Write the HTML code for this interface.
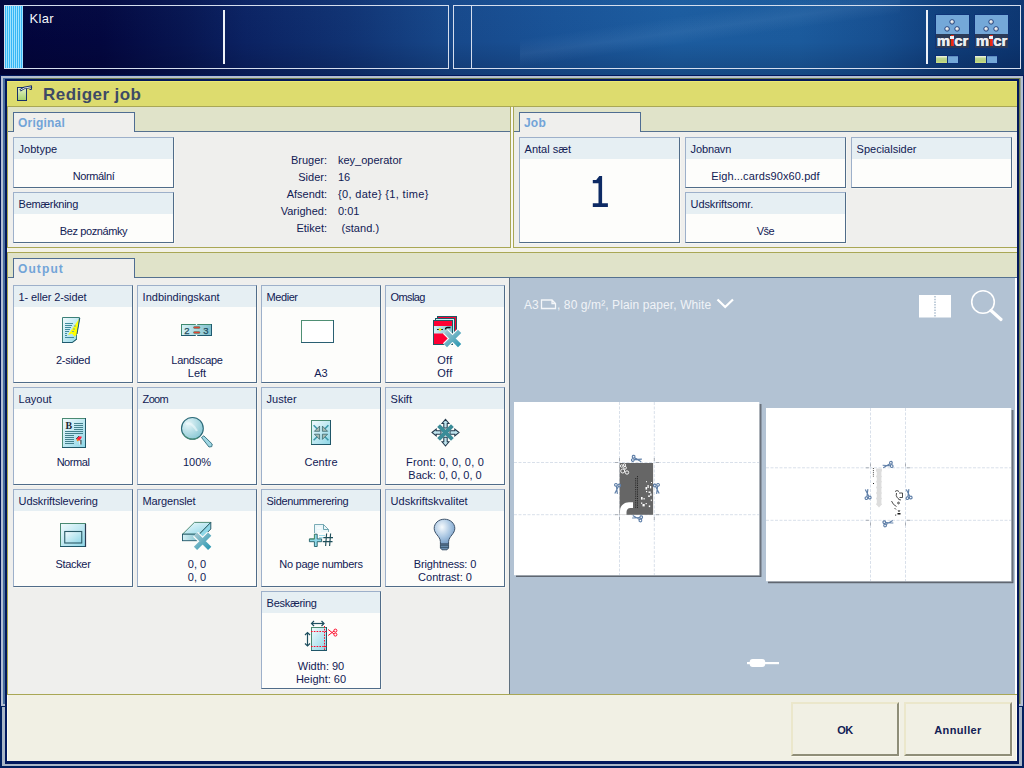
<!DOCTYPE html>
<html>
<head>
<meta charset="utf-8">
<title>Rediger job</title>
<style>
*{box-sizing:border-box;margin:0;padding:0}
html,body{width:1024px;height:768px;overflow:hidden}
body{position:relative;font-family:"Liberation Sans",sans-serif;font-size:11px;color:#112054;
 background:#03073c;}
.abs{position:absolute}
/* top status area */
#top{left:0;top:0;width:1024px;height:76px;
 background:
 linear-gradient(172deg,rgba(255,255,255,0) 30%,rgba(200,225,255,0.07) 42%,rgba(255,255,255,0) 52%) 520px 0/380px 76px no-repeat,
 linear-gradient(180deg,rgba(70,140,210,0.03) 0%,rgba(0,0,20,0.0) 55%,rgba(0,0,25,0.20) 100%),
 linear-gradient(90deg,#02043a 0%,#03073f 10%,#071550 18%,#0b2262 24%,#103272 34%,#17488a 44%,#195296 54%,#1c5c9f 66%,#1b5a9c 78%,#174f90 86%,#103f7c 92%,#0c3570 100%);}
.sbox{border:1px solid #d5deee;}
.vline{background:#eef2f8}
/* dialog */
#dlg{left:0;top:75px;width:1024px;height:693px;background:#02185c}
.tabl{font-weight:bold;font-size:12px;color:#72a4d8;letter-spacing:0.2px;line-height:14px;display:block}
.tile{position:absolute;background:#fdfdfb;border:1px solid #9db0ca;border-right-color:#506c89;border-bottom-color:#506c89;box-shadow:1px 1px 0 #f6f6f2}
.tile .h{position:absolute;left:0;top:0;right:0;height:21px;background:#e6eff3;padding:5px 0 0 4.6px;white-space:nowrap;line-height:13px}
.tile .v{position:absolute;left:0;right:0;text-align:center;white-space:nowrap;line-height:13px}
.btn{position:absolute;box-shadow:1px 1px 0 #faf8ec;background:#f1f0e4;border:2px solid #ebe7cb;border-right-color:#8f8e78;border-bottom-color:#8f8e78;font-weight:bold;font-size:11px;text-align:center}

.pnl{background:#e0e3c9;border:1px solid #a9a755}
.pnl .pc{position:absolute;left:0;right:0;top:24px;bottom:0;background:#efefed;border-top:1px solid #55718f}
.tab{background:#efefed;border:1px solid #4f6d92;border-bottom:none;padding:3px 0 0 4px}

.ml{text-align:right;white-space:nowrap;line-height:13px}
.mv{white-space:nowrap;line-height:13px}
.big{position:absolute;left:0;right:0;top:30px;text-align:center;font-size:43px;line-height:50px;color:#16265a}
.ic{position:absolute;left:0;top:0}
.btn span{position:absolute;left:0;right:0;top:20px;line-height:13px}
.micr{width:33px;height:33px;background:linear-gradient(180deg,#74a8d8 0,#74a8d8 19px,#2c3b58 19px,#2c3b58 33px);outline:1px solid #0e3478}
.mt{position:absolute;left:0.5px;top:17px;font-weight:bold;font-size:15px;line-height:17px;white-space:nowrap;color:#eceef1;text-shadow:0.4px 0 0 #eceef1}
.mi{color:#f02a10;text-shadow:0.4px 0 0 #f02a10}
.md{position:absolute;left:14px;top:21px;width:4px;height:3px;background:#eef2f8}
</style>
</head>
<body>
<svg width="0" height="0" style="position:absolute"><defs>
<linearGradient id="cy" x1="0" y1="0" x2="1" y2="1"><stop offset="0" stop-color="#f2fbfd"/><stop offset="1" stop-color="#8dd6e6"/></linearGradient>
<linearGradient id="cyh" x1="0" y1="0" x2="1" y2="0"><stop offset="0" stop-color="#d6f2f6"/><stop offset="1" stop-color="#7fbfcc"/></linearGradient>
<linearGradient id="xg" x1="0" y1="0" x2="1" y2="1"><stop offset="0" stop-color="#9fc6d0"/><stop offset="1" stop-color="#2f9ab4"/></linearGradient>
<radialGradient id="mg" cx="0.3" cy="0.3" r="0.8"><stop offset="0" stop-color="#e6f6f9"/><stop offset="1" stop-color="#86c6d3"/></radialGradient>
<radialGradient id="bg" cx="0.38" cy="0.32" r="0.75"><stop offset="0" stop-color="#f6fafd"/><stop offset="0.55" stop-color="#a9c6e2"/><stop offset="1" stop-color="#6f97c2"/></radialGradient>
</defs></svg>
<div id="top" class="abs"></div>
<div class="abs sbox" style="left:4px;top:5px;width:445px;height:64px"></div>
<div class="abs" id="stripes" style="left:5px;top:6px;width:18px;height:62px;background:repeating-linear-gradient(90deg,#36b6f5 0,#36b6f5 1px,#9fe2ff 1px,#9fe2ff 2px)"></div>
<div class="abs" style="left:29.5px;top:11px;font-size:13px;line-height:15px;color:#f4f6fa;letter-spacing:0.3px">Klar</div>
<div class="abs vline" style="left:223px;top:10px;width:2px;height:54px"></div>
<div class="abs sbox" style="left:453px;top:5px;width:568px;height:64px"></div>
<div class="abs" style="left:471px;top:6px;width:1px;height:62px;background:#d5deee"></div>
<div class="abs vline" style="left:926px;top:10px;width:2px;height:54px"></div>

<div class="abs micr" style="left:936px;top:15px"><svg width="33" height="19" style="position:absolute;left:0;top:0"><defs><radialGradient id="sp936" cx="0.4" cy="0.35" r="0.7"><stop offset="0" stop-color="#ffffff"/><stop offset="1" stop-color="#a8b0b8"/></radialGradient></defs><g fill="url(#sp936)" stroke="#0c2c70" stroke-width="0.8"><circle cx="16.1" cy="6.9" r="2.3"/><circle cx="11.1" cy="13.9" r="2.3"/><circle cx="21.1" cy="13.9" r="2.3"/></g></svg><div class="mt">m<span class="mi">i</span>cr</div><div class="md"></div></div>
<div class="abs" style="left:936px;top:56px;width:11px;height:7px;background:linear-gradient(180deg,#f4f7e6 0,#bcd692 35%,#b4d080 70%,#cfe084 100%);outline:1px solid #0c2f74"></div>
<div class="abs" style="left:948px;top:56px;width:10px;height:7px;background:#74a8d8;border-top:1px solid #5f8fc0;outline:1px solid #0c2f74"></div>
<div class="abs micr" style="left:975px;top:15px"><svg width="33" height="19" style="position:absolute;left:0;top:0"><defs><radialGradient id="sp975" cx="0.4" cy="0.35" r="0.7"><stop offset="0" stop-color="#ffffff"/><stop offset="1" stop-color="#a8b0b8"/></radialGradient></defs><g fill="url(#sp975)" stroke="#0c2c70" stroke-width="0.8"><circle cx="16.1" cy="6.9" r="2.3"/><circle cx="11.1" cy="13.9" r="2.3"/><circle cx="21.1" cy="13.9" r="2.3"/></g></svg><div class="mt">m<span class="mi">i</span>cr</div><div class="md"></div></div>
<div class="abs" style="left:975px;top:56px;width:11px;height:7px;background:linear-gradient(180deg,#f4f7e6 0,#bcd692 35%,#b4d080 70%,#cfe084 100%);outline:1px solid #0c2f74"></div>
<div class="abs" style="left:987px;top:56px;width:10px;height:7px;background:#74a8d8;border-top:1px solid #5f8fc0;outline:1px solid #0c2f74"></div>
<!-- dialog frame -->
<div id="dlg" class="abs"></div>
<div class="abs" style="left:1px;top:76px;width:1022px;height:630px;background:#b4bfd2"></div>
<div class="abs" style="left:3px;top:78px;width:1018px;height:626px;background:#4a6f9e"></div>
<div class="abs" style="left:6px;top:78px;width:1015px;height:1px;background:linear-gradient(90deg,#4a6f9e 0,#6f7d50 40px,#6f7d50 100%)"></div>
<div class="abs" style="left:1019px;top:78px;width:2px;height:626px;background:linear-gradient(90deg,#6f7d50 0,#6f7d50 1px,#98a490 1px,#98a490 2px)"></div>
<div class="abs" style="left:5px;top:79px;width:1014px;height:682px;background:#02185c"></div>
<div class="abs" style="left:0;top:706px;width:1024px;height:62px;background:#02205e"></div>
<div class="abs" style="left:2px;top:707px;width:1020px;height:59px;background:#a9b6c6"></div>
<div class="abs" style="left:5px;top:707px;width:1014px;height:57px;background:#02185c"></div>
<!-- title bar -->
<div class="abs" style="left:7px;top:81px;width:1010px;height:26px;background:#dddc6e;border-top:1px solid #ebe872;border-bottom:1px solid #b6b457"></div>
<div class="abs" style="left:43px;top:85px;font-size:17px;line-height:19px;letter-spacing:0.45px;font-weight:bold;color:#3d4a66;white-space:nowrap">Rediger job</div>
<svg class="abs" style="left:14px;top:84px" width="22" height="19" viewBox="14 84 22 19"><defs><linearGradient id="gp" x1="0" y1="0" x2="0" y2="1"><stop offset="0" stop-color="#e6f2c8"/><stop offset="1" stop-color="#a6d26a"/></linearGradient></defs>
<rect x="17.5" y="87.5" width="9" height="13" fill="url(#gp)" stroke="#16306a"/>
<path d="M20 90.5L24 88L32 86.5" stroke="#16306a" stroke-width="2.4" fill="none"/><path d="M20.5 90L24.5 88L31.5 86.8" stroke="#eef2f6" stroke-width="0.9" fill="none"/>
<path d="M31.5 86V89.5H29.5" stroke="#16306a" stroke-width="1" fill="none"/></svg>
<!-- body -->
<div class="abs" id="bodybg" style="left:7px;top:107px;width:1010px;height:588px;background:#e0e3c9"></div>
<div class="abs" id="botbar" style="left:7px;top:694px;width:1010px;height:67px;background:#f1f0e4;border-top:1px solid #a9a755;border-left:1px solid #fffdf0;border-right:1px solid #fffdf0"></div>

<!-- Original panel -->
<div class="abs pnl" style="left:7px;top:106px;width:504px;height:142px"><div class="pc"></div></div>
<div class="abs tab" style="left:13px;top:112px;width:122px;height:20px"><span class="tabl">Original</span></div>
<!-- Job panel -->
<div class="abs pnl" style="left:513px;top:106px;width:504px;height:142px;border-right:none"><div class="pc"></div></div>
<div class="abs tab" style="left:519px;top:112px;width:122px;height:20px"><span class="tabl">Job</span></div>
<!-- white divider -->
<div class="abs" style="left:511px;top:107px;width:2px;height:141px;background:#f8f8f2"></div>
<!-- gap -->
<div class="abs" style="left:7px;top:248px;width:1010px;height:4px;background:#f3f2e6"></div>
<!-- Output panel -->
<div class="abs pnl" style="left:7px;top:252px;width:1010px;height:443px;border-right:none"><div class="pc"></div></div>
<div class="abs tab" style="left:13px;top:258px;width:122px;height:20px"><span class="tabl" style="letter-spacing:1.1px">Output</span></div>
<!-- preview -->
<div class="abs" id="pv" style="left:509px;top:278px;width:506px;height:416px;background:#b2c2d3;border-left:1px solid #5f7080"></div>
<div class="abs" style="left:1015px;top:278px;width:2px;height:416px;background:#ffffff"></div>


<!-- preview content -->
<div class="abs" style="left:524px;top:298px;font-size:12px;line-height:14px;color:#f0f3f7;white-space:nowrap">A3</div>
<div class="abs" style="left:557px;top:298px;font-size:12px;line-height:14px;color:#f0f3f7;white-space:nowrap;letter-spacing:0.1px">, 80 g/m², Plain paper, White</div>
<svg class="abs" style="left:510px;top:278px" width="505" height="416" viewBox="510 278 505 416">
<defs><g id="sc" fill="none" stroke="#5f7fa8" stroke-width="1.15"><circle cx="-3.4" cy="-1.7" r="1.35"/><circle cx="-3.4" cy="1.7" r="1.35"/><path d="M-2.3 -1L5.2 1.3M-2.3 1L5.2 -1.3"/></g></defs>
<!-- header icons -->
<path d="M541.5 300V308.5H555.5V303.5L552 300Z M552 300V303.5H555.5" fill="none" stroke="#f4f6f9" stroke-width="1.3"/>
<path d="M717.5 299.5L725.2 307L733 299.5" fill="none" stroke="#ffffff" stroke-width="2.2"/>
<rect x="919" y="295" width="32" height="22.5" fill="#ffffff"/>
<path d="M935 296V317" stroke="#b2c2d3" stroke-width="1.6" stroke-dasharray="1.5 1.2"/>
<circle cx="983" cy="302" r="11.3" fill="none" stroke="#ffffff" stroke-width="1.6"/>
<path d="M991 310.5L1001 319.5" stroke="#ffffff" stroke-width="3.2" stroke-linecap="round"/>
<!-- left page -->
<rect x="516" y="404" width="245.4" height="172.9" fill="#555c66"/>
<rect x="516" y="404" width="244.4" height="171.9" fill="#8a929c"/>
<rect x="514" y="402" width="245.3" height="173.2" fill="#ffffff"/>
<g stroke="#d9e0ea" stroke-width="1" stroke-dasharray="3 1.5" fill="none">
<path d="M619.5 402V575M654.3 402V575M514 462.5H759M514 514.7H759"/></g>
<g stroke="#a9aeb6" stroke-width="1"><path d="M615 462.5h3M656 462.5h3M615 514.7h3M656 514.7h3M619.5 458v3M654.3 458v3M619.5 517v3M654.3 517v3"/></g>
<rect x="619.6" y="463" width="33.5" height="51.8" fill="#666666"/>
<g fill="none" stroke="#ffffff" stroke-width="0.9"><circle cx="621.7" cy="466" r="1.3"/><circle cx="624.5" cy="465" r="1.2"/><circle cx="625" cy="467.8" r="1.4"/><circle cx="622.7" cy="471" r="2"/><circle cx="627" cy="472.5" r="1.7"/></g>
<path d="M620 514.8V511C620 506 624 502.3 629 502.3H633V508H630C628 508 626.5 510 626.5 512V514.8Z" fill="#ffffff"/>
<path d="M635.7 478V508M637.5 476V508" stroke="#222" stroke-width="0.9" stroke-dasharray="1.2 1"/>
<g fill="#ffffff"><rect x="645.5" y="487" width="1.6" height="2.6"/><rect x="647.5" y="485" width="1.2" height="3"/><rect x="650" y="486" width="1.2" height="2.4"/><rect x="646" y="491" width="1.2" height="1.2"/><rect x="648.5" y="491.5" width="2.2" height="1.4"/><rect x="650.2" y="493.5" width="1.4" height="2.2"/><rect x="648" y="495.5" width="2" height="1.3"/><rect x="641" y="497" width="1.6" height="2.6"/><rect x="643.5" y="498" width="1.2" height="1.5"/><rect x="641" y="502.5" width="1.3" height="1.3"/><rect x="642.5" y="504" width="2.2" height="2.4"/><rect x="645.6" y="503" width="1.2" height="1.2"/><rect x="648.8" y="505.5" width="1.4" height="1.6"/><rect x="650.8" y="499.5" width="1" height="1.6"/><rect x="646" y="481.2" width="1" height="1"/><rect x="651" y="482" width="1" height="1"/></g>
<use href="#sc" transform="translate(636.5,459.2) rotate(14)"/>
<use href="#sc" transform="translate(617,488.5) rotate(100)"/>
<use href="#sc" transform="translate(657,488.5) rotate(80)"/>
<use href="#sc" transform="translate(637.5,518) rotate(194)"/>
<!-- right page -->
<rect x="768" y="410" width="245.4" height="173.2" fill="#555c66"/>
<rect x="768" y="410" width="244.4" height="172.2" fill="#8a929c"/>
<rect x="766" y="408" width="245.2" height="173.2" fill="#ffffff"/>
<g stroke="#d9e0ea" stroke-width="1" stroke-dasharray="3 1.5" fill="none">
<path d="M870.5 408V581M905.5 408V581M766 467.8H1011M766 520.3H1011"/></g>
<g stroke="#a9aeb6" stroke-width="1"><path d="M866 467.8h3M907 467.8h3M866 520.3h3M907 520.3h3M870.5 463.5v3M905.5 463.5v3M870.5 522.5v3M905.5 522.5v3"/></g>
<path d="M876.3 468.4H881.7L882 471L879 473.6L882 476.4L879.2 479L882 481.8L879.2 484.6L882 487.4L879.2 490.2L882 493L879.2 495.8L882 498.6L879.2 501.4L882 504.2L879 507.4L876 504.2L878 501.4L876 498.6L878 495.8L876 493L878 490.2L876 487.4L878 484.6L876 481.8L878 479L876 476.4L878 473.6L876 471Z" fill="#dddddd"/>
<rect x="876.8" y="469" width="4.6" height="36" fill="#dddddd"/>
<path d="M873.4 468v9" stroke="#333" stroke-width="0.9" stroke-dasharray="1 1.1"/><rect x="873" y="483" width="1" height="1" fill="#222"/>
<g fill="none" stroke="#222" stroke-width="0.8"><path d="M895 491.5q2-2 4 0M896.5 493q-1 3 1 5M899 493h3.5v4.5H899.5M898 498q0 2 3 2"/><circle cx="898.5" cy="503" r="0.9"/><path d="M891.5 501q1.5 4 5 5.5M894.5 508l1.5 1.5"/></g>
<path d="M897.5 510.5h3l-1.5 1.5zM897.5 513h3v1.6h-3z" fill="#111"/><rect x="895.2" y="514.6" width="1" height="1" fill="#111"/>
<use href="#sc" transform="translate(888,465.3) rotate(166)"/>
<use href="#sc" transform="translate(867.5,494.5) rotate(260)"/>
<use href="#sc" transform="translate(908.5,494.5) rotate(-100)"/>
<use href="#sc" transform="translate(888,523) rotate(-14)"/>
<!-- slider -->
<rect x="747" y="662" width="32" height="2.2" fill="#ffffff"/>
<rect x="749.7" y="659" width="15.5" height="8" rx="3" fill="#ffffff"/>
</svg>

<!-- boxes -->
<div class="tile" style="left:13px;top:137px;width:161px;height:51px"><div class="h">Jobtype</div><div class="v" style="top:32px;letter-spacing:-0.37px">Normální</div></div>
<div class="tile" style="left:13px;top:192px;width:161px;height:51px"><div class="h" style="letter-spacing:-0.3px">Bemærkning</div><div class="v" style="top:32px;letter-spacing:-0.39px">Bez poznámky</div></div>
<div class="tile" style="left:519px;top:137px;width:161px;height:106px"><div class="h">Antal sæt</div><svg style="position:absolute;left:0;top:0" width="159" height="104" viewBox="520 138 159 104"><path d="M592.8 180H596.2L599.3 176H602.1V203.2H607.9V207H592.8V203.2H598.5V183.3H592.8Z" fill="#0d2a64"/></svg></div>
<div class="tile" style="left:685px;top:137px;width:161px;height:51px"><div class="h" style="letter-spacing:-0.14px">Jobnavn</div><div class="v" style="top:32px;letter-spacing:0.1px">Eigh...cards90x60.pdf</div></div>
<div class="tile" style="left:851px;top:137px;width:161px;height:51px"><div class="h">Specialsider</div></div>
<div class="tile" style="left:685px;top:192px;width:161px;height:51px"><div class="h" style="letter-spacing:-0.12px">Udskriftsomr.</div><div class="v" style="top:32px;letter-spacing:-0.5px">Vše</div></div>
<div class="abs ml" style="left:227px;top:154px;width:100px">Bruger:</div><div class="abs mv" style="left:338px;top:154px">key_operator</div>
<div class="abs ml" style="left:227px;top:171px;width:100px">Sider:</div><div class="abs mv" style="left:338px;top:171px">16</div>
<div class="abs ml" style="left:227px;top:188px;width:100px">Afsendt:</div><div class="abs mv" style="left:338px;top:188px;letter-spacing:0.33px">{0, date} {1, time}</div>
<div class="abs ml" style="left:227px;top:205px;width:100px">Varighed:</div><div class="abs mv" style="left:338px;top:205px">0:01</div>
<div class="abs ml" style="left:227px;top:222px;width:100px">Etiket:</div><div class="abs mv" style="left:341.5px;top:222px;letter-spacing:0.05px">(stand.)</div>
<!-- tiles -->
<div class="tile" style="left:13px;top:285px;width:120px;height:98px"><div class="h" style="letter-spacing:-0.12px">1- eller 2-sidet</div><div class="v" style="top:68px;letter-spacing:-0.31px">2-sided</div><svg class="ic" id="i1" width="118" height="96" viewBox="14 286 118 96"><path d="M62.5 317.5H79.5L76.5 334V339L72 342.5H62.5Z" fill="url(#cy)" stroke="#3c8078"/>
<path d="M62 342.5H72.5L77 339" fill="none" stroke="#1f5a70"/>
<g stroke="#3f8c9e" stroke-width="1"><path d="M65 323.5H73"/><path d="M65 325.5H72"/><path d="M65 327.5H71"/><path d="M65 329.5H70"/><path d="M65 331.5H69"/><path d="M65 333.5H67"/><path d="M65 335.5H67"/><path d="M65 337.5H74"/></g>
<path d="M79 319L68 335L72 333.5L74.5 336.5L77 334Z" fill="#ffff00"/>
<path d="M79.8 318L77 334" stroke="#1f5a70" stroke-width="1" fill="none"/>
<path d="M74 326h2M73 329h2M72 331.5h2" stroke="#4a90c8" stroke-width="0.8"/></svg></div>
<div class="tile" style="left:137px;top:285px;width:120px;height:98px"><div class="h">Indbindingskant</div><div class="v" style="top:68px;letter-spacing:-0.27px">Landscape</div><div class="v" style="top:81px">Left</div><svg class="ic" id="i2" width="118" height="96" viewBox="138 286 118 96"><rect x="181.5" y="324.5" width="30" height="11" fill="url(#cyh)" stroke="#3f8a70"/>
<path d="M181 335.5H212M211.5 324V336" stroke="#1f5a70" fill="none"/>
<path d="M196.5 323V325M196.5 335V337" stroke="#fdfdfb" stroke-width="1.4"/>
<text x="184.3" y="334" font-family="Liberation Sans, sans-serif" font-size="9.5" fill="#1f4c5c" stroke="#1f4c5c" stroke-width="0.25">2</text>
<text x="203.3" y="334" font-family="Liberation Sans, sans-serif" font-size="9.5" fill="#1f4c5c" stroke="#1f4c5c" stroke-width="0.25">3</text>
<rect x="193.5" y="326.6" width="6.5" height="1.8" rx="0.9" fill="#f24030" stroke="#2f7f60" stroke-width="0.5"/>
<rect x="193.5" y="331.6" width="6.5" height="1.8" rx="0.9" fill="#f24030" stroke="#2f7f60" stroke-width="0.5"/></svg></div>
<div class="tile" style="left:261px;top:285px;width:120px;height:98px"><div class="h" style="letter-spacing:-0.45px">Medier</div><div class="v" style="top:68px"></div><div class="v" style="top:81px">A3</div><svg class="ic" id="i3" width="118" height="96" viewBox="262 286 118 96"><rect x="301.5" y="320.5" width="32" height="22" fill="#ffffff" stroke="#4f8f74"/>
<path d="M301 342.5H334M333.5 320V343" stroke="#2a5f72" fill="none"/></svg></div>
<div class="tile" style="left:385px;top:285px;width:120px;height:98px"><div class="h" style="letter-spacing:-0.6px">Omslag</div><div class="v" style="top:68px;letter-spacing:0.4px">Off</div><div class="v" style="top:81px;letter-spacing:0.4px">Off</div><svg class="ic" id="i4" width="118" height="96" viewBox="386 286 118 96"><rect x="437.5" y="316.5" width="19" height="24" fill="#ff0033" stroke="#1f5a66"/>
<rect x="435.5" y="318.5" width="19" height="24" fill="#c8eef4" stroke="#1f5a66"/>
<rect x="433.5" y="320.5" width="19" height="24" fill="#ff0033" stroke="#1f5a66"/>
<rect x="434" y="326" width="18" height="7.5" fill="url(#cyh)"/>
<path d="M437 329.5h6" stroke="#111" stroke-width="0.9"/><circle cx="440" cy="329.5" r="1.2" fill="#ffee00"/>
<path d="M445.5 329.5q0-2 2-2h3" stroke="#111" stroke-width="1.3" fill="none"/><g stroke-linecap="butt"><path d="M445.4 331.4L459.6 345.6M459.6 331.4L445.4 345.6" stroke="#fdfdfb" stroke-width="7"/><path d="M445.4 331.4L459.6 345.6M459.6 331.4L445.4 345.6" stroke="url(#xg)" stroke-width="4.6"/></g></svg></div>
<div class="tile" style="left:13px;top:387px;width:120px;height:98px"><div class="h">Layout</div><div class="v" style="top:68px;letter-spacing:-0.45px">Normal</div><svg class="ic" id="i5" width="118" height="96" viewBox="14 388 118 96"><rect x="62.5" y="418.5" width="23" height="29" fill="url(#cy)" stroke="#4a8a72"/>
<path d="M62 447.5H86M85.5 418V448" stroke="#1f5668" fill="none"/>
<g stroke="#43808c"><path d="M74 423.5H83"/><path d="M74 425.5H83"/><path d="M74 427.5H83"/><path d="M74 429.5H83"/><path d="M65 431.5H83"/><path d="M65 433.5H83"/><path d="M65 435.5H74"/><path d="M65 437.5H74"/><path d="M65 439.5H74"/><path d="M65 441.5H74"/><path d="M65 443.5H74"/></g>
<text x="65.6" y="429" font-family="Liberation Serif, serif" font-weight="bold" font-size="10" fill="#1f2a33">B</text>
<path d="M76.3 439L79 436.3L82 436.8L79.5 441Z" fill="#ff1f3f"/><path d="M76.3 439L77.3 441.5L79 440Z" fill="#ff8a00"/>
<path d="M80.2 440.5V444.5" stroke="#fff" stroke-width="1.6"/><path d="M80.9 440V444.5" stroke="#111" stroke-width="0.9"/>
<path d="M76 439L79 436" stroke="#222" stroke-width="0.7"/></svg></div>
<div class="tile" style="left:137px;top:387px;width:120px;height:98px"><div class="h" style="letter-spacing:-0.67px">Zoom</div><div class="v" style="top:68px">100%</div><svg class="ic" id="i6" width="118" height="96" viewBox="138 388 118 96"><path d="M201.5 437.5L203.8 435.8L212.2 444L211.8 446.6L209 447Z" fill="#9fd6e2" stroke="#2f6c7a" stroke-width="0.9"/>
<circle cx="192.4" cy="428.4" r="10.9" fill="url(#mg)" stroke="#2c6a78" stroke-width="1.1"/>
<path d="M183 433.5A10.9 10.9 0 0 0 198.5 437.5" fill="none" stroke="#4c9070" stroke-width="1"/>
<path d="M186 424Q191 421 197 431" stroke="#f4fcfd" stroke-width="2.2" fill="none" opacity="0.55"/></svg></div>
<div class="tile" style="left:261px;top:387px;width:120px;height:98px"><div class="h">Juster</div><div class="v" style="top:68px">Centre</div><svg class="ic" id="i7" width="118" height="96" viewBox="262 388 118 96"><rect x="311.5" y="420.5" width="19" height="24" fill="url(#cy)" stroke="#4a8a72"/>
<path d="M311 444.5H331M330.5 420V445" stroke="#1f5668" fill="none"/><path d="M313.6 425.3L317.6 429.3" stroke="#3a98a8" stroke-width="1.6"/><path d="M319.6 431.3L314.40000000000003 431.3L319.6 426.1Z" fill="#a8bcb4" stroke="#2a5a62" stroke-width="0.7"/><path d="M328.4 425.3L324.4 429.3" stroke="#3a98a8" stroke-width="1.6"/><path d="M322.4 431.3L327.59999999999997 431.3L322.4 426.1Z" fill="#a8bcb4" stroke="#2a5a62" stroke-width="0.7"/><path d="M313.6 440.2L317.6 436.2" stroke="#3a98a8" stroke-width="1.6"/><path d="M319.6 434.2L314.40000000000003 434.2L319.6 439.4Z" fill="#a8bcb4" stroke="#2a5a62" stroke-width="0.7"/><path d="M328.4 440.2L324.4 436.2" stroke="#3a98a8" stroke-width="1.6"/><path d="M322.4 434.2L327.59999999999997 434.2L322.4 439.4Z" fill="#a8bcb4" stroke="#2a5a62" stroke-width="0.7"/></svg></div>
<div class="tile" style="left:385px;top:387px;width:120px;height:98px"><div class="h">Skift</div><div class="v" style="top:68px;letter-spacing:0.2px">Front: 0, 0, 0, 0</div><div class="v" style="top:81px">Back: 0, 0, 0, 0</div><svg class="ic" id="i8" width="118" height="96" viewBox="386 388 118 96"><g fill="#bfe4ee" stroke="#243a4c" stroke-width="1.05">
<path d="M445.5 419.3L449 423.5H447.2V428H443.8V423.5H442Z"/>
<path d="M445.5 446L449 441.8H447.2V437.3H443.8V441.8H442Z"/>
<path d="M432 432.5L436.2 429V430.8H441V434.2H436.2V436Z"/>
<path d="M459 432.5L454.8 429V430.8H450V434.2H454.8V436Z"/></g>
<path d="M438.6 425.6L452.4 439.4M452.4 425.6L438.6 439.4" stroke="#3a8c98" stroke-width="4"/></svg></div>
<div class="tile" style="left:13px;top:489px;width:120px;height:98px"><div class="h" style="letter-spacing:-0.12px">Udskriftslevering</div><div class="v" style="top:68px;letter-spacing:-0.33px">Stacker</div><svg class="ic" id="i9" width="118" height="96" viewBox="14 490 118 96"><rect x="60.5" y="523.5" width="25" height="23" fill="url(#cy)" stroke="#4a8a72"/>
<path d="M60 546.5H86" stroke="#1f5668" fill="none"/><path d="M85.5 524V547" stroke="#2a3a50" stroke-width="1.2" fill="none"/>
<rect x="64.75" y="531.5" width="17" height="11.5" fill="url(#cy)" stroke="#2a5a66" stroke-width="1.1"/></svg></div>
<div class="tile" style="left:137px;top:489px;width:120px;height:98px"><div class="h" style="letter-spacing:-0.16px">Margenslet</div><div class="v" style="top:68px">0, 0</div><div class="v" style="top:81px">0, 0</div><svg class="ic" id="i10" width="118" height="96" viewBox="138 490 118 96"><path d="M182.5 534.2L194.4 522.4H210.8L199.3 534.2Z" fill="url(#cy)" stroke="#3f8068" stroke-width="0.9"/>
<path d="M199.3 534.2L210.8 522.4V529L199.3 540.7Z" fill="#8fd8e8" stroke="#1f4f5c" stroke-width="0.9"/>
<rect x="182.5" y="534.2" width="16.8" height="6.5" fill="url(#cyh)" stroke="#1f5668" stroke-width="0.9"/><g stroke-linecap="butt"><path d="M195.5 534.2L209.7 548.4M209.7 534.2L195.5 548.4" stroke="#fdfdfb" stroke-width="7"/><path d="M195.5 534.2L209.7 548.4M209.7 534.2L195.5 548.4" stroke="url(#xg)" stroke-width="4.6"/></g></svg></div>
<div class="tile" style="left:261px;top:489px;width:120px;height:98px"><div class="h" style="letter-spacing:-0.35px">Sidenummerering</div><div class="v" style="top:68px;letter-spacing:-0.27px">No page numbers</div><svg class="ic" id="i11" width="118" height="96" viewBox="262 490 118 96"><path d="M314.5 533V524.5H323.5L328.5 529.5V532" fill="#eaf7fa" stroke="#5f9aa6" stroke-width="0.9" opacity="0.9"/>
<path d="M323.5 524.5V529.5H328.5" fill="none" stroke="#5f9aa6" stroke-width="0.9"/>
<path d="M317 528h4M317 531h4" stroke="#fff" stroke-width="1.2"/>
<path d="M319 535.5h6M319 537.6h4" stroke="#9fdcea" stroke-width="1.2"/>
<path d="M314.4 534.2H317.2V538.9H321.6V541.7H317.2V546.5H314.4V541.7H309.4V538.9H314.4Z" fill="#8fd8e8" stroke="#225e66" stroke-width="0.9"/>
<path d="M309.6 539H314.5V534.3" stroke="#4f9468" stroke-width="0.9" fill="none"/>
<path d="M326.6 533.5L325.6 546M330.6 533.5L329.6 546M323.3 537.6H333M322.8 541.6H332.5" stroke="#1f4f5a" stroke-width="1.15" fill="none"/></svg></div>
<div class="tile" style="left:385px;top:489px;width:120px;height:98px"><div class="h">Udskriftskvalitet</div><div class="v" style="top:68px;letter-spacing:-0.15px">Brightness: 0</div><div class="v" style="top:81px">Contrast: 0</div><svg class="ic" id="i12" width="118" height="96" viewBox="386 490 118 96"><path d="M444.4 519.2C450.5 519.2 454.8 523.5 454.8 528.3C454.8 534 449 536 448.6 541.5V544H440.4V541.5C440 536 434.2 534 434.2 528.3C434.2 523.5 438.3 519.2 444.4 519.2Z" fill="url(#bg)" stroke="#3c526a" stroke-width="1"/>
<path d="M440.4 544.2H448.6V548L447 549.8H442L440.4 548Z" fill="#6f93b8" stroke="#33485e" stroke-width="0.9"/>
<path d="M440.4 545.7H448.6M440.4 547.6H448.6" stroke="#2f4a5e" stroke-width="0.8"/></svg></div>
<div class="tile" style="left:261px;top:591px;width:120px;height:98px"><div class="h" style="letter-spacing:-0.29px">Beskæring</div><div class="v" style="top:68px">Width: 90</div><div class="v" style="top:81px">Height: 60</div><svg class="ic" id="i13" width="118" height="96" viewBox="262 592 118 96"><rect x="311.5" y="627.5" width="15" height="23" fill="url(#cy)" stroke="#4a8a72"/>
<path d="M311 650.5H327M326.5 627V651" stroke="#1f5668" fill="none"/>
<g stroke="#ff0a2a" stroke-width="1" stroke-dasharray="1.6 1.2" fill="none"><path d="M311 631.5H327"/><path d="M311 646.5H327"/><path d="M324.5 626V651"/></g>
<g stroke="#1f5060" stroke-width="1.2" fill="none"><path d="M312 623.5H323.5"/><path d="M314 621L311.5 623.5L314 626M321.5 621L324 623.5L321.5 626"/>
<path d="M307.5 633V645.5"/><path d="M305 635L307.5 632.5L310 635M305 643.5L307.5 646L310 643.5"/></g>
<g stroke="#ff0a2a" stroke-width="1" fill="none"><path d="M328.2 629.5L334 634M328.2 635.5L334 631"/><circle cx="335.4" cy="630.6" r="1.5"/><circle cx="335.4" cy="634.6" r="1.5"/></g></svg></div>
<!-- buttons -->
<div class="btn" style="left:791px;top:702px;width:108px;height:54px"><span style="letter-spacing:-0.5px">OK</span></div>
<div class="btn" style="left:904px;top:702px;width:108px;height:54px"><span style="letter-spacing:0.35px">Annuller</span></div>
</body>
</html>
